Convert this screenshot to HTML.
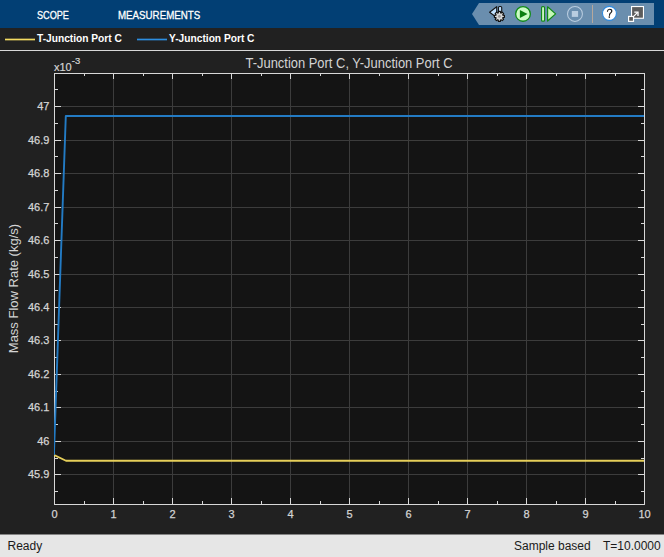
<!DOCTYPE html>
<html><head><meta charset="utf-8"><style>
html,body{margin:0;padding:0;width:664px;height:557px;overflow:hidden;background:#212121;font-family:"Liberation Sans",sans-serif;}
.abs{position:absolute;}
#tb{left:0;top:0;width:664px;height:28px;background:#023f74;}
.tab{position:absolute;top:8px;color:#fff;-webkit-text-stroke:0.3px #fff;font-size:11px;line-height:14px;transform-origin:0 0;white-space:nowrap}
#leg{left:0;top:28px;width:664px;height:22px;background:#212121;}
#sep{left:0;top:50px;width:664px;height:1px;background:#d8d8d8;}
.lt{position:absolute;top:4px;color:#fff;font-size:10.2px;font-weight:bold;line-height:14px;white-space:nowrap}
#status{left:0;top:534px;width:664px;height:23px;background:linear-gradient(#848484 0,#848484 1px,#e6e6e6 1px);color:#1a1a1a;font-size:12px;}
#status span{position:absolute;top:5px;line-height:14px;white-space:nowrap}
</style></head><body>
<div id="tb" class="abs">
 <div class="tab" style="left:37px;transform:scaleX(0.83)">SCOPE</div>
 <div class="tab" style="left:118px;transform:scaleX(0.885)">MEASUREMENTS</div>
 <svg class="abs" style="left:0;top:0" width="664" height="28">
  <polygon points="479,3 654,3 654,25 479,25 472,14" fill="#6a8eae"/>
  
<path d="M489.6 12.3 L496.7 6.7 V17.5 Z" fill="#c2e2ff" stroke="#151515" stroke-width="1.1" stroke-linejoin="round"/>
<rect x="498.5" y="6.5" width="3.2" height="8" rx="1" fill="#c2e2ff" stroke="#151515" stroke-width="1.1"/>
<path d="M498.23 12.89 L498.43 11.39 L500.37 11.39 L500.57 12.89 L501.05 13.09 L502.25 12.17 L503.63 13.55 L502.71 14.75 L502.91 15.23 L504.41 15.43 L504.41 17.37 L502.91 17.57 L502.71 18.05 L503.63 19.25 L502.25 20.63 L501.05 19.71 L500.57 19.91 L500.37 21.41 L498.43 21.41 L498.23 19.91 L497.75 19.71 L496.55 20.63 L495.17 19.25 L496.09 18.05 L495.89 17.57 L494.39 17.37 L494.39 15.43 L495.89 15.23 L496.09 14.75 L495.17 13.55 L496.55 12.17 L497.75 13.09Z" fill="#d6d6d6" stroke="#111111" stroke-width="1.15" stroke-linejoin="round"/>
<circle cx="499.4" cy="16.4" r="1.4" fill="#9a9a9a"/>
<circle cx="523" cy="13.9" r="7.35" fill="#ccfcc4" stroke="#118a18" stroke-width="1.3"/>
<path d="M519.9 9.9 L527.5 14 L519.9 18.1 Z" fill="#0b7f10"/>
<rect x="541.6" y="6.6" width="2.9" height="14.6" rx="1" fill="#e2ffd6" stroke="#118a18" stroke-width="1.2"/>
<path d="M547.6 6.8 L555.6 13.9 L547.6 21 Z" fill="#c6f6b8" stroke="#118a18" stroke-width="1.2" stroke-linejoin="round"/>
<circle cx="574.97" cy="13.95" r="7.45" fill="none" stroke="#b9cde0" stroke-width="1.05"/>
<rect x="571.8" y="11" width="6.3" height="5.9" fill="#b9cde0"/>
<rect x="592" y="5" width="1" height="18" fill="#b6a89c"/>
<circle cx="609.45" cy="13.35" r="7" fill="#ffffff" stroke="#2d8ae0" stroke-width="1.1"/>
<path d="M607.5 11.2 C607.6 9.8 608.6 9.2 609.7 9.2 C611 9.2 611.9 10 611.8 11.1 C611.7 12.2 610.9 12.6 610.3 13.2 C609.8 13.7 609.6 14.3 609.5 15.3" fill="none" stroke="#151515" stroke-width="1.15" stroke-linecap="round"/><circle cx="609.3" cy="17.1" r="0.8" fill="#151515"/>
<rect x="631.55" y="6.55" width="11.9" height="11.7" fill="#5c5c5c" stroke="#ffffff" stroke-width="1.1"/>
<rect x="628.6" y="16.45" width="4.9" height="4.9" fill="#5c5c5c" stroke="#ffffff" stroke-width="1.2"/>
<path d="M633.9 16.1 L637.6 12.4" stroke="#ffffff" stroke-width="1.25"/>
<path d="M634.3 12.2 H638 V15.9" fill="none" stroke="#ffffff" stroke-width="1.3"/>

 </svg>
</div>
<div id="leg" class="abs">
 <svg class="abs" style="left:0;top:0" width="200" height="22"><path d="M5 11.5H35" stroke="#f4dc62" stroke-width="1.7"/><path d="M137 11.5H167" stroke="#2d8ee0" stroke-width="1.7"/></svg>
 <div class="lt" style="left:37px">T-Junction Port C</div>
 
 <div class="lt" style="left:169px">Y-Junction Port C</div>
</div>
<div id="sep" class="abs"></div>
<svg class="abs" style="left:0;top:0" width="664" height="557">
<rect x="54" y="73" width="591" height="432" fill="#141414"/><path d="M113.5 73V504M172.5 73V504M231.5 73V504M290.5 73V504M349.5 73V504M408.5 73V504M467.5 73V504M526.5 73V504M585.5 73V504M54 106.5H644M54 140.5H644M54 173.5H644M54 207.5H644M54 240.5H644M54 274.5H644M54 307.5H644M54 340.5H644M54 374.5H644M54 407.5H644M54 441.5H644M54 474.5H644" stroke="#3c3c3c" stroke-width="1" fill="none"/><path d="M54.5 504v-6M54.5 73v6M84.5 504v-3M84.5 73v3M113.5 504v-6M113.5 73v6M143.5 504v-3M143.5 73v3M172.5 504v-6M172.5 73v6M202.5 504v-3M202.5 73v3M231.5 504v-6M231.5 73v6M261.5 504v-3M261.5 73v3M290.5 504v-6M290.5 73v6M320.5 504v-3M320.5 73v3M349.5 504v-6M349.5 73v6M379.5 504v-3M379.5 73v3M408.5 504v-6M408.5 73v6M438.5 504v-3M438.5 73v3M467.5 504v-6M467.5 73v6M497.5 504v-3M497.5 73v3M526.5 504v-6M526.5 73v6M556.5 504v-3M556.5 73v3M585.5 504v-6M585.5 73v6M615.5 504v-3M615.5 73v3M644.5 504v-6M644.5 73v6M54 89.5h4M645 89.5h-4M54 106.5h7M645 106.5h-7M54 123.5h4M645 123.5h-4M54 140.5h7M645 140.5h-7M54 156.5h4M645 156.5h-4M54 173.5h7M645 173.5h-7M54 190.5h4M645 190.5h-4M54 207.5h7M645 207.5h-7M54 223.5h4M645 223.5h-4M54 240.5h7M645 240.5h-7M54 257.5h4M645 257.5h-4M54 274.5h7M645 274.5h-7M54 290.5h4M645 290.5h-4M54 307.5h7M645 307.5h-7M54 324.5h4M645 324.5h-4M54 340.5h7M645 340.5h-7M54 357.5h4M645 357.5h-4M54 374.5h7M645 374.5h-7M54 391.5h4M645 391.5h-4M54 407.5h7M645 407.5h-7M54 424.5h4M645 424.5h-4M54 441.5h7M645 441.5h-7M54 458.5h4M645 458.5h-4M54 474.5h7M645 474.5h-7M54 491.5h4M645 491.5h-4" stroke="#d8d8d8" stroke-width="1" fill="none"/><rect x="54.5" y="73.5" width="590" height="431" stroke="#d8d8d8" fill="none"/><defs><clipPath id="cp"><rect x="54" y="73" width="591" height="432"/></clipPath></defs><g clip-path="url(#cp)"><polyline points="54.2,455.08 66.0,460.77 644,460.77" stroke="#e6cf5a" stroke-width="1.8" fill="none" stroke-linejoin="round"/><polyline points="53.9,455.08 65.8,116.00 644,116.00" stroke="#237bc4" stroke-width="1.9" fill="none" stroke-linejoin="round"/></g><g fill="#d4d4d4" stroke="#d4d4d4" stroke-width="0.25" font-size="11" font-family="Liberation Sans"><text x="54.5" y="518" text-anchor="middle">0</text><text x="113.5" y="518" text-anchor="middle">1</text><text x="172.5" y="518" text-anchor="middle">2</text><text x="231.5" y="518" text-anchor="middle">3</text><text x="290.5" y="518" text-anchor="middle">4</text><text x="349.5" y="518" text-anchor="middle">5</text><text x="408.5" y="518" text-anchor="middle">6</text><text x="467.5" y="518" text-anchor="middle">7</text><text x="526.5" y="518" text-anchor="middle">8</text><text x="585.5" y="518" text-anchor="middle">9</text><text x="644.5" y="518" text-anchor="middle">10</text><text x="49.4" y="109.8" text-anchor="end">47</text><text x="49.4" y="143.8" text-anchor="end">46.9</text><text x="49.4" y="176.8" text-anchor="end">46.8</text><text x="49.4" y="210.8" text-anchor="end">46.7</text><text x="49.4" y="243.8" text-anchor="end">46.6</text><text x="49.4" y="277.8" text-anchor="end">46.5</text><text x="49.4" y="310.8" text-anchor="end">46.4</text><text x="49.4" y="343.8" text-anchor="end">46.3</text><text x="49.4" y="377.8" text-anchor="end">46.2</text><text x="49.4" y="410.8" text-anchor="end">46.1</text><text x="49.4" y="444.8" text-anchor="end">46</text><text x="49.4" y="477.8" text-anchor="end">45.9</text></g>
<text transform="translate(349,68) scale(0.925,1)" text-anchor="middle" fill="#d4d4d4" font-size="14" font-family="Liberation Sans">T-Junction Port C, Y-Junction Port C</text>
<text x="54" y="71" fill="#d4d4d4" stroke="#d4d4d4" stroke-width="0.2" font-size="11" font-family="Liberation Sans">x10</text>
<text x="71.8" y="64" fill="#d4d4d4" stroke="#d4d4d4" stroke-width="0.2" font-size="9.5" font-family="Liberation Sans">-3</text>
<text transform="translate(17.5,353.2) rotate(-90)" fill="#d4d4d4" font-size="13" font-family="Liberation Sans">Mass Flow Rate (kg/s)</text>
</svg>
<div id="status" class="abs">
 <span style="left:7.5px">Ready</span>
 <span style="left:514px">Sample based</span>
 <span style="left:603px">T=10.0000</span>
</div>
</body></html>
